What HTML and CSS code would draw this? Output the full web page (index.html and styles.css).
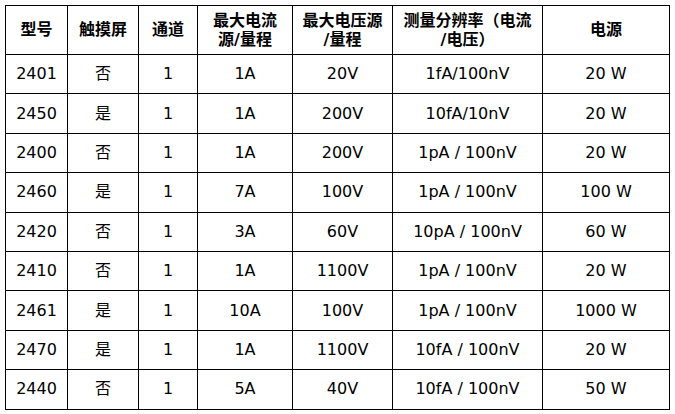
FILE: index.html
```html
<!DOCTYPE html>
<html lang="zh-CN">
<head>
<meta charset="utf-8">
<title>型号对比</title>
<link rel="stylesheet" href="styles.css">
</head>
<body>
<table class="spec">
  <colgroup>
    <col class="c1"><col class="c2"><col class="c3"><col class="c4"><col class="c5"><col class="c6"><col class="c7">
  </colgroup>
  <thead>
    <tr>
      <th>型号</th>
      <th>触摸屏</th>
      <th>通道</th>
      <th>最大电流<br>源/量程</th>
      <th>最大电压源<br>/量程</th>
      <th>测量分辨率（电流<br>/电压）</th>
      <th>电源</th>
    </tr>
  </thead>
  <tbody>
    <tr><td>2401</td><td>否</td><td>1</td><td>1A</td><td>20V</td><td>1fA/100nV</td><td>20 W</td></tr>
    <tr><td>2450</td><td>是</td><td>1</td><td>1A</td><td>200V</td><td>10fA/10nV</td><td>20 W</td></tr>
    <tr><td>2400</td><td>否</td><td>1</td><td>1A</td><td>200V</td><td>1pA / 100nV</td><td>20 W</td></tr>
    <tr><td>2460</td><td>是</td><td>1</td><td>7A</td><td>100V</td><td>1pA / 100nV</td><td>100 W</td></tr>
    <tr><td>2420</td><td>否</td><td>1</td><td>3A</td><td>60V</td><td>10pA / 100nV</td><td>60 W</td></tr>
    <tr><td>2410</td><td>否</td><td>1</td><td>1A</td><td>1100V</td><td>1pA / 100nV</td><td>20 W</td></tr>
    <tr><td>2461</td><td>是</td><td>1</td><td>10A</td><td>100V</td><td>1pA / 100nV</td><td>1000 W</td></tr>
    <tr><td>2470</td><td>是</td><td>1</td><td>1A</td><td>1100V</td><td>10fA / 100nV</td><td>20 W</td></tr>
    <tr><td>2440</td><td>否</td><td>1</td><td>5A</td><td>40V</td><td>10fA / 100nV</td><td>50 W</td></tr>
  </tbody>
</table>
</body>
</html>
```
FILE: styles.css
```css
html, body {
  margin: 0;
  padding: 0;
  background: #fff;
}
body {
  padding: 5px 0 0 5px;
  font-family: "DejaVu Sans", "Noto Sans CJK SC", sans-serif;
  font-size: 16px;
  color: #000;
}
.spec {
  border-collapse: collapse;
  table-layout: fixed;
  width: 665px;
}
.c1 { width: 62px; }
.c2 { width: 71px; }
.c3 { width: 59px; }
.c4 { width: 95px; }
.c5 { width: 100px; }
.c6 { width: 150px; }
.c7 { width: 127px; }
.spec th,
.spec td {
  border: 1px solid #000;
  text-align: center;
  vertical-align: middle;
  padding: 0;
}
.spec th {
  height: 47px;
  font-weight: bold;
  line-height: 19px;
  padding-bottom: 1px;
}
.spec td {
  height: 38.4px;
  line-height: 20px;
}
```
